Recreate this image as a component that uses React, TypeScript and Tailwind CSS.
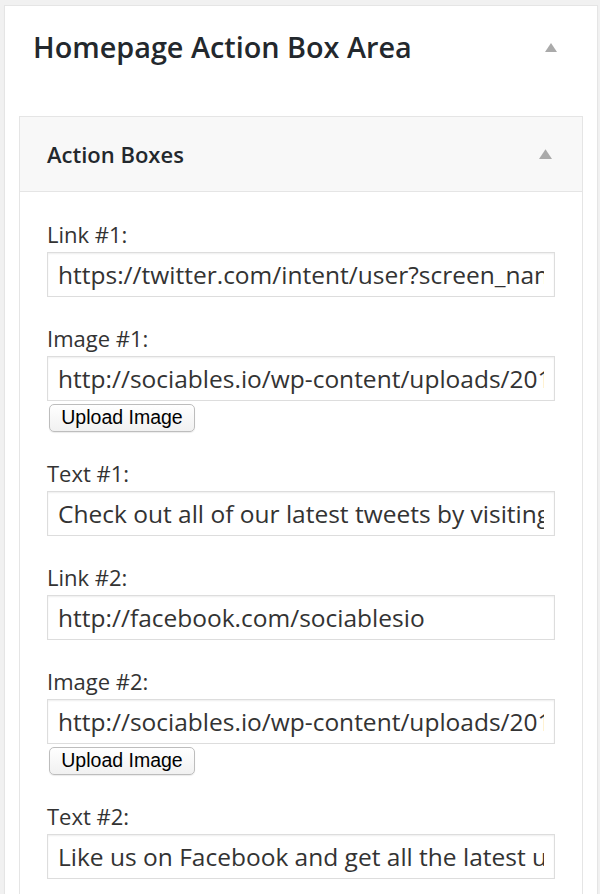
const fields = [
  { label: "Link #1:", value: "https://twitter.com/intent/user?screen_name=sociablesio" },
  { label: "Image #1:", value: "http://sociables.io/wp-content/uploads/2014/10/twitter.png", upload: true },
  { label: "Text #1:", value: "Check out all of our latest tweets by visiting our Twitter page" },
  { label: "Link #2:", value: "http://facebook.com/sociablesio" },
  { label: "Image #2:", value: "http://sociables.io/wp-content/uploads/2014/10/facebook.png", upload: true },
  { label: "Text #2:", value: "Like us on Facebook and get all the latest updates" },
];

function Arrow({ className }: { className: string }) {
  return (
    <svg viewBox="0 0 12 9" className={className} aria-hidden>
      <path d="M6 0 L12 9 L0 9 Z" fill="#aaaaaa" />
    </svg>
  );
}

function Field({ label, value, upload }: { label: string; value: string; upload?: boolean }) {
  return (
    <div className="mb-[26px]">
      <label className="block text-[22px] leading-[30px] text-[#333] mb-[3px]">{label}</label>
      <input
        readOnly
        value={value}
        className="block w-full h-[45px] px-[10px] border border-[#dddddd] bg-white text-[24.5px] text-[#333] shadow-[inset_0_1px_2px_rgba(0,0,0,0.07)] outline-none font-['Open_Sans',sans-serif]"
      />
      {upload && (
        <button className="mt-[3px] ml-[2px] w-[146px] h-[28px] rounded-[5px] border border-[#bdbdbd] bg-linear-to-b from-white to-[#f1f1f1] shadow-[0_1px_1px_rgba(0,0,0,0.08)] text-[19.5px] leading-none text-black font-['Liberation_Sans',Arial,sans-serif]">
          Upload Image
        </button>
      )}
    </div>
  );
}

export default function App() {
  return (
    <div className="min-h-screen bg-[#f1f1f1] pt-[5px] font-['Open_Sans',sans-serif]">
      <div className="ml-[4px] w-[594px] min-h-[900px] bg-white border border-[#e5e5e5] shadow-[0_1px_1px_rgba(0,0,0,0.04)]">
        <div className="flex items-center justify-between pl-[28px] pr-[40px] pt-[23px] pb-[51px]">
          <h3 className="text-[28.8px] leading-[36px] font-semibold text-[#23282d]">Homepage Action Box Area</h3>
          <Arrow className="w-[12px] h-[9px]" />
        </div>
        <div className="mx-[14px] border border-[#e5e5e5]">
          <div className="flex items-center justify-between h-[75px] bg-[#f8f8f8] border-b border-[#e5e5e5] pl-[27px] pr-[30px]">
            <h4 className="text-[22px] font-semibold text-[#23282d]">Action Boxes</h4>
            <Arrow className="w-[13px] h-[10px]" />
          </div>
          <div className="px-[27px] pt-[27px]">
            {fields.map((f) => (
              <Field key={f.label} {...f} />
            ))}
          </div>
        </div>
      </div>
    </div>
  );
}
